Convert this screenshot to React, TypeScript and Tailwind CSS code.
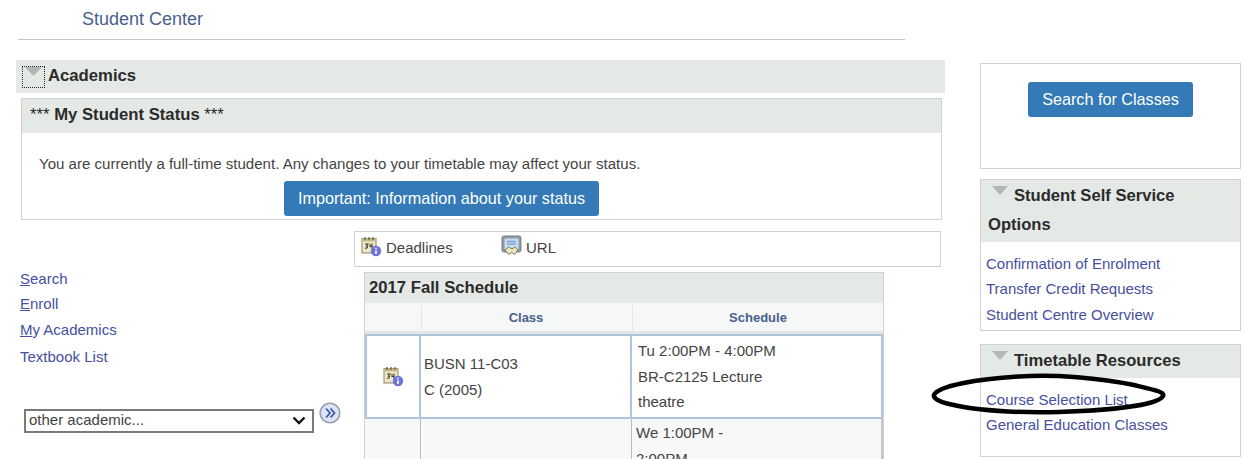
import React from 'react';

const ACADEMIC_LINKS = [
  { key: 'S', rest: 'earch', mt: 'mt-0' },
  { key: 'E', rest: 'nroll', mt: 'mt-[6px]' },
  { key: 'M', rest: 'y Academics', mt: 'mt-[7px]' },
  { key: '', rest: 'Textbook List', mt: 'mt-[8px]' },
];

function Arrow() {
  return (
    <svg width="18" height="10" viewBox="0 0 18 10" className="shrink-0">
      <polygon points="1,0 17,0 9,9" fill="#b5b7b5" />
    </svg>
  );
}

function DeadlineIcon() {
  return (
    <svg width="21" height="21" viewBox="0 0 21 21" className="shrink-0">
      <rect x="1" y="2.5" width="14" height="14.5" fill="#efe7c4" stroke="#8d8462" />
      <rect x="1" y="2.5" width="14" height="3" fill="#c9b987" />
      <path d="M4 1v3M8 1v3M12 1v3" stroke="#5f5a44" strokeWidth="1.2" />
      <path d="M4 8h3l-1.5 2c1.5 0 1.5 2.5 -1.5 2.2M9 8v2.5h2.5M11 7.5v5" stroke="#3b3a32" strokeWidth="1.1" fill="none" />
      <circle cx="15" cy="15" r="5.2" fill="#6b74dc" />
      <path d="M15 11.8v1.4M15 14.3v3.6" stroke="#fff" strokeWidth="1.6" />
    </svg>
  );
}

function UrlIcon() {
  return (
    <svg width="21" height="21" viewBox="0 0 21 21" className="shrink-0">
      <rect x="1" y="1" width="19" height="16" rx="2" fill="#8f9aa5" stroke="#77818b" />
      <rect x="3.5" y="3.5" width="14" height="10.5" fill="#c9dbef" />
      <path d="M6 6.5h9M6 9h9" stroke="#7fa2cf" strokeWidth="1.4" />
      <path d="M4 15l3.5-3 3.5 2 3-2 3 3-3.5 4.5-2.8-2-3 2z" fill="#ede5bd" stroke="#837c5c" />
    </svg>
  );
}

function GoIcon() {
  return (
    <svg width="22" height="22" viewBox="0 0 22 22">
      <circle cx="11" cy="11" r="9.8" fill="#dce5f7" stroke="#9a9fa8" strokeWidth="1.6" />
      <path d="M7 6.5l4 4.5-4 4.5M11.5 6.5l4 4.5-4 4.5" fill="none" stroke="#3d5aa8" strokeWidth="1.8" />
    </svg>
  );
}

function SideLink({ children }: { children: React.ReactNode }) {
  return <a className="block text-[#46509f] text-[15px] leading-[25.4px]">{children}</a>;
}

export default function App() {
  return (
    <div className="relative h-[459px] w-[1245px] overflow-hidden bg-white font-['Liberation_Sans',Arial,sans-serif] text-[#444]">
      {/* Page title */}
      <div className="ml-[18px] w-[887px] h-[40px] border-b border-[#c4c6c6]">
        <h1 className="pl-[64px] pt-[9px] text-[18px] leading-[21px] text-[#46618c]">Student Center</h1>
      </div>

      <div className="flex mt-[20px]">
        {/* Main column */}
        <div className="ml-[16px] w-[929px] shrink-0">
          <div className="h-[33px] bg-[#e4e9e6] flex items-center pl-[6px] gap-[3px]">
            <div className="w-[23px] h-[22px] border border-dotted border-[#222] flex justify-center items-start">
              <svg width="19" height="9" viewBox="0 0 19 9">
                <polygon points="1,0 18,0 9.5,9" fill="#b5b7b5" />
              </svg>
            </div>
            <span className="font-bold text-[16.7px] leading-[20px] -mt-[2px] text-[#2b2b2b]">Academics</span>
          </div>

          {/* Status box */}
          <div className="ml-[5px] mt-[5px] w-[921px] h-[122px] border border-[#cfd2d2]">
            <div className="h-[34px] bg-[#e4e9e6] pl-[8px] pb-[2px] flex items-center text-[16.7px] text-[#2b2b2b]">
              <span className="whitespace-pre">*** </span>
              <span className="font-bold">My Student Status</span>
              <span className="whitespace-pre"> ***</span>
            </div>
            <p className="pl-[17px] pt-[21px] text-[15.05px] leading-[19px]">
              You are currently a full-time student. Any changes to your timetable may affect your status.
            </p>
            <div className="mt-[8px] ml-[262px]">
              <button className="w-[315px] h-[35px] rounded-[3px] bg-[#337ab7] text-white text-[16.2px]">
                Important: Information about your status
              </button>
            </div>
          </div>

          <div className="flex mt-[11px]">
            {/* Left nav */}
            <div className="w-[338px] shrink-0 pl-[4px]">
              <div className="pt-[38px]">
                {ACADEMIC_LINKS.map((l) => (
                  <a key={l.rest} className={`block ${l.mt} text-[#46509f] text-[15px] leading-[19px]`}>
                    <span className="underline">{l.key}</span>
                    {l.rest}
                  </a>
                ))}
              </div>
              <div className="flex items-start mt-[40px] ml-[4px]">
                <div className="mt-[3px] w-[290px] h-[24px] border-2 border-[#77797a] flex items-center justify-between pl-[3px] pr-[6px] pb-[1px]">
                  <span className="text-[15px] text-[#444]">other academic...</span>
                  <svg width="14" height="9" viewBox="0 0 14 9">
                    <path d="M1.5 1.5L7 7l5.5-5.5" fill="none" stroke="#111" strokeWidth="2.4" />
                  </svg>
                </div>
                <div className="ml-[5px] -mt-[4px]">
                  <GoIcon />
                </div>
              </div>
            </div>

            {/* Schedule */}
            <div className="w-[587px] shrink-0">
              <div className="h-[36px] border border-[#cfd2d2] flex items-center pl-[6px] text-[15px]">
                <div className="flex items-center gap-[4px] w-[140px] -mt-[1px]">
                  <span className="-mt-[5px]"><DeadlineIcon /></span>
                  <span>Deadlines</span>
                </div>
                <div className="flex items-center gap-[4px] -mt-[2px]">
                  <span className="-mt-[5px]"><UrlIcon /></span>
                  <span>URL</span>
                </div>
              </div>

              <div className="ml-[10px] mt-[5px] w-[520px] border-x border-t border-[#cfd2d2]">
                <div className="h-[30px] bg-[#e4e9e6] pl-[4px] flex items-center font-bold text-[16.7px] text-[#2b2b2b]">
                  2017 Fall Schedule
                </div>
                <div className="grid grid-cols-[56px_211px_251px] h-[31px] pt-[2px] bg-[#f6f7f7] border-b-[3px] border-[#e5e7e7] text-[13px] font-bold text-[#46618c]">
                  <div />
                  <div className="border-l border-[#e3e5e5] flex items-center justify-center pr-[2px]">Class</div>
                  <div className="border-l border-[#e3e5e5] flex items-center justify-center">Schedule</div>
                </div>
                <div className="grid grid-cols-[56px_211px_251px] h-[85px] border-y-2 border-[#aec4de] text-[15px] leading-[25.5px]">
                  <div className="border-x-2 border-[#aec4de] flex items-center justify-center">
                    <DeadlineIcon />
                  </div>
                  <div className="border-r-2 border-[#aec4de] pl-[3px] flex flex-col justify-center">
                    <span>BUSN 11-C03</span>
                    <span>C (2005)</span>
                  </div>
                  <div className="pl-[6px] border-r-2 border-[#aec4de] flex flex-col justify-center">
                    <span>Tu 2:00PM - 4:00PM</span>
                    <span>BR-C2125 Lecture</span>
                    <span>theatre</span>
                  </div>
                </div>
                <div className="grid grid-cols-[56px_211px_251px] h-[84px] bg-[#f8f8f8] text-[15px] leading-[25.5px] border-r-2 border-[#c4c6c6]">
                  <div className="border-r border-[#bbbdbd]" />
                  <div className="border-r border-[#bbbdbd]" />
                  <div className="pl-[4px] pt-[1px] flex flex-col">
                    <span>We 1:00PM -</span>
                    <span>2:00PM</span>
                  </div>
                </div>
              </div>
            </div>
          </div>
        </div>

        {/* Right column */}
        <div className="ml-[35px] w-[261px] shrink-0 mt-[3px]">
          <div className="h-[106px] border border-[#cfd2d2] flex justify-center items-start pt-[18px]">
            <button className="w-[165px] h-[35px] rounded-[3px] bg-[#337ab7] text-white text-[16.2px]">
              Search for Classes
            </button>
          </div>

          <div className="mt-[10px] h-[152px] border border-[#cfd2d2]">
            <div className="h-[62px] bg-[#e4e9e6] pl-[7px] pt-[1px] font-bold text-[16.6px] leading-[29px] text-[#2b2b2b]">
              <div className="flex items-start gap-[5px]">
                <span className="pl-[3px] pt-[5px] -mb-[5px]"><Arrow /></span>
                <span>Student Self Service</span>
              </div>
              <div>Options</div>
            </div>
            <div className="pl-[5px] pt-[9px]">
              <SideLink>Confirmation of Enrolment</SideLink>
              <SideLink>Transfer Credit Requests</SideLink>
              <SideLink>Student Centre Overview</SideLink>
            </div>
          </div>

          <div className="mt-[13px] h-[113px] border border-[#cfd2d2]">
            <div className="h-[33px] bg-[#e4e9e6] pl-[10px] flex items-start gap-[5px] font-bold text-[16.6px] leading-[29px] text-[#2b2b2b]">
              <span className="pt-[6px]"><Arrow /></span>
              <span className="pt-[1px]">Timetable Resources</span>
            </div>
            <div className="pl-[5px] pt-[9px]">
              <SideLink>Course Selection List</SideLink>
              <SideLink>General Education Classes</SideLink>
            </div>
          </div>
        </div>
      </div>

      {/* Hand drawn circle over the link */}
      <svg width="240" height="46" viewBox="0 0 240 46" fill="none" className="absolute left-[929px] top-[371px] pointer-events-none">
        <path
          d="M5 24C9 15 48 8 90 5.5C125 3 172 7 205 14C226 19 236 21 234 25C230 33 190 39 130 41C85 42 45 39 20 33C10 31 4 27 5 24Z"
          stroke="#000"
          strokeWidth="4.5"
        />
      </svg>
    </div>
  );
}
